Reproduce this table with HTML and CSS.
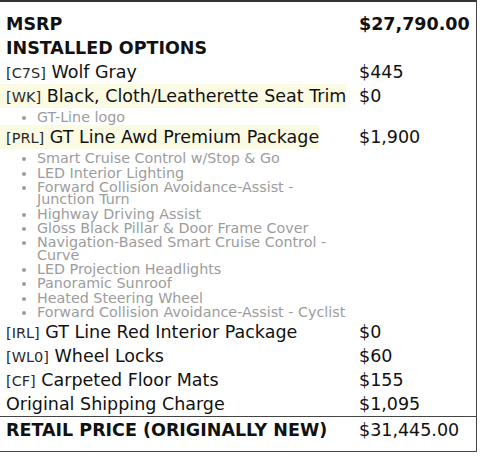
FILE: index.html
```html
<!DOCTYPE html>
<html>
<head>
<meta charset="utf-8">
<link rel="stylesheet" href="styles.css">
</head>
<body>
<div class="sticker">
  <table class="price-table">
    <tr class="row head">
      <td class="label">MSRP</td>
      <td class="value">$27,790.00</td>
    </tr>
    <tr class="row head">
      <td class="label" colspan="2">INSTALLED OPTIONS</td>
    </tr>
    <tr class="row">
      <td class="label"><span class="code">[C7S]</span> Wolf Gray</td>
      <td class="value">$445</td>
    </tr>
    <tr class="row">
      <td class="label"><span class="hl"><span class="code">[WK]</span> Black, Cloth/Leatherette Seat Trim</span></td>
      <td class="value">$0</td>
    </tr>
    <tr class="sub">
      <td colspan="2">
        <ul class="features">
          <li>GT-Line logo</li>
        </ul>
      </td>
    </tr>
    <tr class="row">
      <td class="label"><span class="hl"><span class="code">[PRL]</span> GT Line Awd Premium Package</span></td>
      <td class="value">$1,900</td>
    </tr>
    <tr class="sub">
      <td colspan="2">
        <ul class="features">
          <li>Smart Cruise Control w/Stop &amp; Go</li>
          <li>LED Interior Lighting</li>
          <li>Forward Collision Avoidance-Assist - Junction Turn</li>
          <li>Highway Driving Assist</li>
          <li>Gloss Black Pillar &amp; Door Frame Cover</li>
          <li>Navigation-Based Smart Cruise Control - Curve</li>
          <li>LED Projection Headlights</li>
          <li>Panoramic Sunroof</li>
          <li>Heated Steering Wheel</li>
          <li>Forward Collision Avoidance-Assist - Cyclist</li>
        </ul>
      </td>
    </tr>
    <tr class="row">
      <td class="label"><span class="code">[IRL]</span> GT Line Red Interior Package</td>
      <td class="value">$0</td>
    </tr>
    <tr class="row">
      <td class="label"><span class="code">[WL0]</span> Wheel Locks</td>
      <td class="value">$60</td>
    </tr>
    <tr class="row">
      <td class="label"><span class="code">[CF]</span> Carpeted Floor Mats</td>
      <td class="value">$155</td>
    </tr>
    <tr class="row">
      <td class="label">Original Shipping Charge</td>
      <td class="value">$1,095</td>
    </tr>
    <tr class="row total">
      <td class="label">RETAIL PRICE (ORIGINALLY NEW)</td>
      <td class="value">$31,445.00</td>
    </tr>
  </table>
</div>
</body>
</html>
```

FILE: styles.css
```css
html, body {
  margin: 0;
  padding: 0;
  background: #ffffff;
}

body {
  font-family: "DejaVu Sans", sans-serif;
  color: #111111;
}

.sticker {
  width: 476px;
  height: 449px;
  border-top: 2px solid #333333;
  border-right: 1.5px solid #444444;
  border-bottom: 1.5px solid #444444;
  box-sizing: content-box;
}

.price-table {
  border-collapse: collapse;
  width: 100%;
  margin-top: 10px;
}

.price-table td {
  padding: 0;
  vertical-align: middle;
}

.row td {
  height: 24px;
  font-size: 17.5px;
  line-height: 20px;
}

.label {
  padding-left: 6px !important;
  width: 347px;
  white-space: nowrap;
}

.value {
  padding-left: 6px !important;
  white-space: nowrap;
}

.head td {
  font-weight: bold;
}

.code {
  font-size: 14.5px;
  color: #2a2a2a;
}

.hl {
  background: #fbfbe3;
  padding: 2px 0 2px 6px;
  margin-left: -6px;
}

.features {
  margin: 0;
  padding: 0 0 0 37px;
  width: 313px;
  list-style: disc;
  color: #9c9c9c;
  font-size: 14.3px;
  line-height: 12.5px;
}

.features li {
  margin-bottom: 1.8px;
}

.sub td {
  padding-top: 3px;
  padding-bottom: 0;
}

.total td {
  font-weight: bold;
  border-top: 1px solid #444444;
  height: 26px;
}

.total .value {
  font-weight: normal;
}
```
